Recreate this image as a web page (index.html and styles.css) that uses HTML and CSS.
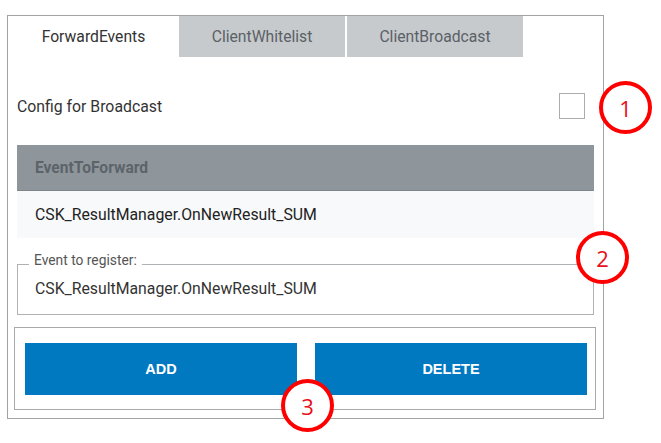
FILE: index.html
```html
<!DOCTYPE html>
<html>
<head>
<meta charset="utf-8">
<link rel="stylesheet" href="styles.css">
</head>
<body>
<div class="panel">
  <div class="tabs">
    <div class="tab tab-active">ForwardEvents</div>
    <div class="tab tab-2">ClientWhitelist</div>
    <div class="tab tab-3">ClientBroadcast</div>
  </div>
  <div class="config">
    <span class="config-label">Config for Broadcast</span>
    <span class="checkbox"></span>
  </div>
  <div class="table">
    <div class="table-head">EventToForward</div>
    <div class="table-row">CSK_ResultManager.OnNewResult_SUM</div>
  </div>
  <fieldset class="field">
    <legend class="field-legend">Event to register:</legend>
    <div class="field-value">CSK_ResultManager.OnNewResult_SUM</div>
  </fieldset>
  <div class="actions">
    <button class="btn btn-add">ADD</button>
    <button class="btn btn-delete">DELETE</button>
  </div>
</div>
<div class="marker marker-1">1</div>
<div class="marker marker-2">2</div>
<div class="marker marker-3">3</div>
</body>
</html>
```

FILE: styles.css
```css
html, body {
  margin: 0;
  padding: 0;
  background: #fff;
}
body {
  position: relative;
  width: 661px;
  height: 443px;
  overflow: hidden;
  font-family: Roboto, "Liberation Sans", sans-serif;
}
.panel {
  margin: 15px 0 0 7px;
  width: 595px;
  height: 402px;
  border: 1px solid #a3a3a3;
  display: flex;
  flex-direction: column;
}
.tabs {
  display: flex;
  height: 41px;
}
.tab {
  display: flex;
  align-items: center;
  justify-content: center;
  font-size: 15.7px;
  color: #5b6166;
  background: #c6cacd;
}
.tab-active {
  width: 171px;
  background: #fff;
  color: #333;
}
.tab-2 { width: 166px; }
.tab-3 { width: 176px; margin-left: 2px; }
.config {
  display: flex;
  align-items: center;
  justify-content: space-between;
  margin-top: 36px;
  padding: 0 18px 0 9px;
  height: 26px;
}
.config-label {
  font-size: 15.8px;
  color: #333;
}
.checkbox {
  width: 24px;
  height: 24px;
  border: 1px solid #a9adb0;
}
.table {
  margin: 26px 9px 0 9px;
}
.table-head {
  height: 45px;
  display: flex;
  align-items: center;
  padding-left: 18px;
  background: #8f969b;
  border-bottom: 1px solid #7e868b;
  font-weight: bold;
  font-size: 15.6px;
  color: #5c646a;
}
.table-row {
  height: 47px;
  display: flex;
  align-items: center;
  padding-left: 18px;
  background: #f8f9fa;
  font-size: 15.8px;
  color: #222;
}
.field {
  margin: 16px 9px 0 9px;
  padding: 0 17px 10px 17px;
  border: 1px solid #aeb2b5;
  min-width: 0;
}
.field-legend {
  font-size: 13.8px;
  line-height: 13px;
  padding: 0 5px 7px 5px;
  margin-left: -6px;
  color: #555;
}
.field-value {
  height: 30px;
  line-height: 30px;
  font-size: 15.8px;
  color: #333;
}
.actions {
  margin: 12px 7px 0 6px;
  border: 1px solid #a9a9a9;
  padding: 15px 8px 14px 10px;
  display: flex;
  gap: 18px;
}
.btn {
  flex: 1;
  height: 52px;
  border: none;
  background: #0079c1;
  color: #fff;
  font-family: "Liberation Sans", Arial, sans-serif;
  font-weight: bold;
  font-size: 14.5px;
  padding: 0;
}
.marker {
  position: absolute;
  width: 45px;
  height: 45px;
  border: 4px solid #f00;
  border-radius: 50%;
  background: #fff;
  color: #e8101a;
  font-family: "Open Sans", "DejaVu Sans", sans-serif;
  font-size: 22px;
  display: flex;
  align-items: center;
  justify-content: center;
}
.marker-1 { left: 599px; top: 81px; }
.marker-2 { left: 576px; top: 231px; }
.marker-3 { left: 281px; top: 379px; }
```
